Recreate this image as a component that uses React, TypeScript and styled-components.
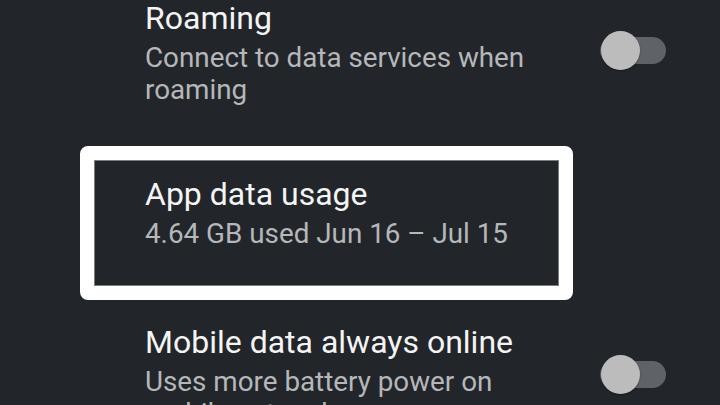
import React, {FC} from 'react';
import styled, {createGlobalStyle} from 'styled-components';

const GlobalStyle = createGlobalStyle`
  html, body {
    margin: 0;
    padding: 0;
    background: #22262a;
  }
  body {
    font-family: Roboto, "Noto Sans", "Liberation Sans", sans-serif;
    -webkit-font-smoothing: antialiased;
  }
`;

const Screen = styled.div`
  width: 720px;
  height: 405px;
  overflow: hidden;
  background: #22262a;
  display: flex;
  flex-direction: column;
`;

const Row = styled.div<{$gapTop?: number}>`
  display: flex;
  align-items: flex-start;
  gap: 30px;
  padding: 0 54px 0 145px;
  margin-top: ${p => p.$gapTop || 0}px;
`;

const Highlight = styled.div`
  box-sizing: border-box;
  margin: 40px 0 0 80px;
  width: 493px;
  border: 14px solid #ffffff;
  border-radius: 8px;
  box-shadow: inset 0 0 0 1px rgba(255, 255, 255, 0.4);
  padding: 16px 14px 36px 51px;
`;

const Texts = styled.div`
  flex: 1;
  min-width: 0;
`;

const Title = styled.div`
  font-size: 32px;
  line-height: 36px;
  color: #f4f4f4;
  white-space: nowrap;
`;

const Summary = styled.div`
  margin-top: 6px;
  font-size: 27.8px;
  line-height: 32px;
  color: #b5b7b9;
`;

const Track = styled.div`
  position: relative;
  flex: none;
  width: 66px;
  height: 27px;
  margin-top: 37px;
  border-radius: 14px;
  background: #5f6266;
`;

const Thumb = styled.div`
  position: absolute;
  left: 1px;
  top: -6px;
  width: 39px;
  height: 39px;
  border-radius: 50%;
  background: #bcbcbc;
  box-shadow: 0 1px 2px rgba(0, 0, 0, 0.35);
`;

const Switch: FC = () => (
  <Track>
    <Thumb />
  </Track>
);

const App: FC = () => (
  <>
    <GlobalStyle />
    <Screen>
      <Row>
        <Texts>
          <Title>Roaming</Title>
          <Summary>Connect to data services when roaming</Summary>
        </Texts>
        <Switch />
      </Row>
      <Highlight>
        <Title>App data usage</Title>
        <Summary>4.64 GB used Jun 16 – Jul 15</Summary>
      </Highlight>
      <Row $gapTop={24}>
        <Texts>
          <Title>Mobile data always online</Title>
          <Summary>Uses more battery power on mobile networks</Summary>
        </Texts>
        <Switch />
      </Row>
    </Screen>
  </>
);

export default App;
